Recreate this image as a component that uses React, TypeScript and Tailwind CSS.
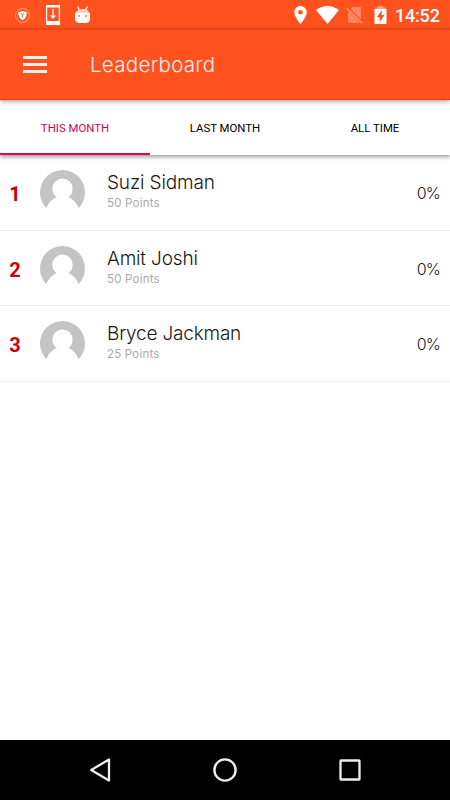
import React from "react";

const players = [
    { rank: 1, name: "Suzi Sidman", points: 50, percent: 0, spacing: "tracking-[-0.15px]" },
    { rank: 2, name: "Amit Joshi", points: 50, percent: 0, spacing: "tracking-[-0.15px]" },
    { rank: 3, name: "Bryce Jackman", points: 25, percent: 0, spacing: "tracking-[-0.2px]" },
];

function StatusBar() {
    return (
        <div className="h-[30px] shrink-0 flex items-center justify-between pl-[15px] pr-[10px] text-white bg-linear-to-b from-[#ff521f] from-85% to-[#e9481a]">
            <div className="flex items-center">
                <svg width="15" height="15" viewBox="0 0 15 15" fill="none">
                    <circle cx="7.5" cy="7.5" r="7" stroke="#ffb9a3" strokeWidth="0.8" />
                    <path d="M7.5 3L11.8 4.2C11.8 8 10.5 10.8 7.5 12.2C4.5 10.8 3.2 8 3.2 4.2Z" fill="white" />
                    <path d="M6 5.5L7.5 6.7L9 5.5M7.5 6.7V9.5" stroke="#ff521f" strokeWidth="0.9" />
                </svg>
                <svg className="ml-[15px]" width="16" height="20" viewBox="0 0 16 20" fill="none">
                    <path fillRule="evenodd" d="M1 0H15V20H1ZM2.2 2.5V16H13.8V2.5Z" fill="white" />
                    <path d="M8 4V12" stroke="white" strokeWidth="1.2" />
                    <path d="M5 10.5H11L8 14Z" fill="white" />
                </svg>
                <svg className="ml-[14px] -mt-px" width="15" height="18" viewBox="0 0 15 18" fill="white">
                    <path d="M2.8 0.5L4.5 5M12.2 0.5L10.5 5" stroke="white" strokeWidth="1.2" />
                    <path d="M0.5 7.5C1 4.5 4 3 7.5 3S14 4.5 14.5 7.5Z" fill="#ffd0c0" />
                    <path d="M0 7H15V13Q14.5 17 11 17H4Q0.5 17 0 13Z" />
                    <circle cx="4" cy="10" r="1" fill="#ff7950" />
                    <circle cx="11" cy="10" r="1" fill="#ff7950" />
                </svg>
            </div>
            <div className="flex items-center">
                <svg width="13" height="18" viewBox="0 0 13 18" fill="white">
                    <path fillRule="evenodd" d="M6.5 0A6.2 6.2 0 0 0 .3 6.2C.3 11 6.5 18 6.5 18S12.7 11 12.7 6.2A6.2 6.2 0 0 0 6.5 0ZM6.5 4A2.3 2.3 0 1 1 6.5 8.6A2.3 2.3 0 0 1 6.5 4Z" />
                </svg>
                <svg className="ml-[9px]" width="23" height="18" viewBox="0 0 23 18" fill="white">
                    <path d="M0 4Q11.5 -4 23 4L11.5 18Z" />
                </svg>
                <svg className="ml-[7px]" width="17" height="18" viewBox="0 0 17 18" fill="none">
                    <path d="M6.5 1H15V13.5L4.5 3ZM2 5L14 17H3Q2 17 2 16Z" fill="#ff8661" />
                    <path d="M0.8 2.3L16 17.3" stroke="#ff9c7e" strokeWidth="1.3" />
                </svg>
                <svg className="ml-[11px]" width="13" height="18" viewBox="0 0 13 18">
                    <path d="M1 3V1.5H4V0H9V1.5H12V3Z" fill="#ff9b7c" />
                    <path fillRule="evenodd" d="M0.5 3H12.5V17Q12.5 18 11.5 18H1.5Q.5 18 .5 17ZM8 4L2.7 11.2H5.7V16L10.5 9H7.5Z" fill="white" />
                </svg>
                <span className="ml-[8px] w-[45px] text-[18px] leading-[20px] whitespace-nowrap font-medium font-[Roboto,sans-serif] tracking-[-0.2px] mt-[2px]">14:52</span>
            </div>
        </div>
    );
}

function Header() {
    return (
        <header className="relative z-20 h-[70px] shrink-0 flex items-center pl-[23px] bg-[#ff521f] border-b border-[#f73604] shadow-[0_2px_4px_rgba(0,0,0,0.3)]">
            <button aria-label="Menu" className="flex flex-col gap-[4px]">
                <span className="w-6 h-[3px] bg-[#fff0ec]" />
                <span className="w-6 h-[3px] bg-[#fff0ec]" />
                <span className="w-6 h-[3px] bg-[#fff0ec]" />
            </button>
            <h1 className="ml-[43px] text-[20.5px] leading-7 font-[350] text-[#fff0eb] tracking-[0.3px]">Leaderboard</h1>
        </header>
    );
}

function Tabs() {
    return (
        <nav className="relative z-10 h-[55px] shrink-0 grid grid-cols-3 bg-white text-[11.4px] font-[Roboto,sans-serif] text-black shadow-[0_2px_4px_rgba(0,0,0,0.4)]">
            <button className="border-b-2 border-[#e6005c] pt-[4px] text-[#d8005b]">THIS MONTH</button>
            <button className="pt-[2px]">LAST MONTH</button>
            <button className="pt-[2px]">ALL TIME</button>
        </nav>
    );
}

function Avatar() {
    return (
        <svg className="ml-[10px] mt-[15px] shrink-0" width="45" height="45" viewBox="0 0 45 45">
            <circle cx="22.5" cy="22.5" r="22.5" fill="#c4c4c4" />
            <circle cx="22.5" cy="18.7" r="10.2" fill="white" />
            <path d="M6.3 38.5C8.5 32.5 12 29 17 27H28C33 29 36.5 32.5 38.7 38.5L45 46H0Z" fill="white" />
        </svg>
    );
}

export default function App() {
    return (
        <div className="w-full h-screen flex flex-col overflow-hidden bg-white font-[Inter,sans-serif]">
            <StatusBar />
            <Header />
            <Tabs />
            <main className="flex-1">
                {players.map((player) => (
                    <div key={player.rank} className="h-[75.6px] flex border-b border-[#eeeeee] text-[#181818]">
                        <div className="w-[30px] pt-[25px] text-center text-[20px] leading-7 font-bold text-[#cc0008] font-[Roboto,sans-serif]">{player.rank}</div>
                        <Avatar />
                        <div className="ml-[22px] pt-[16px] flex-1">
                            <div className={`text-[19px] leading-6 font-[350] ${player.spacing}`}>{player.name}</div>
                            <div className="text-[11.5px] leading-4 text-[#aaaaaa] tracking-[0.2px]">{player.points} Points</div>
                        </div>
                        <div className="pt-[26px] pr-[10px] text-[16px] leading-6 font-[350] tracking-[-0.8px]">{player.percent}%</div>
                    </div>
                ))}
            </main>
            <footer className="h-[60px] shrink-0 flex justify-center items-center gap-[101px] bg-black">
                <svg width="24" height="24" viewBox="0 0 24 24" fill="none" stroke="#eeeeee" strokeWidth="2.3" strokeLinejoin="round">
                    <path d="M21 1.5V22.5L3.2 12Z" />
                </svg>
                <svg width="24" height="24" viewBox="0 0 24 24" fill="none" stroke="#eeeeee" strokeWidth="2.4">
                    <circle cx="12" cy="12" r="10.6" />
                </svg>
                <svg width="24" height="24" viewBox="0 0 24 24" fill="none" stroke="#eeeeee" strokeWidth="2.3">
                    <rect x="2.5" y="2.5" width="19" height="19" rx="0.5" />
                </svg>
            </footer>
        </div>
    );
}
